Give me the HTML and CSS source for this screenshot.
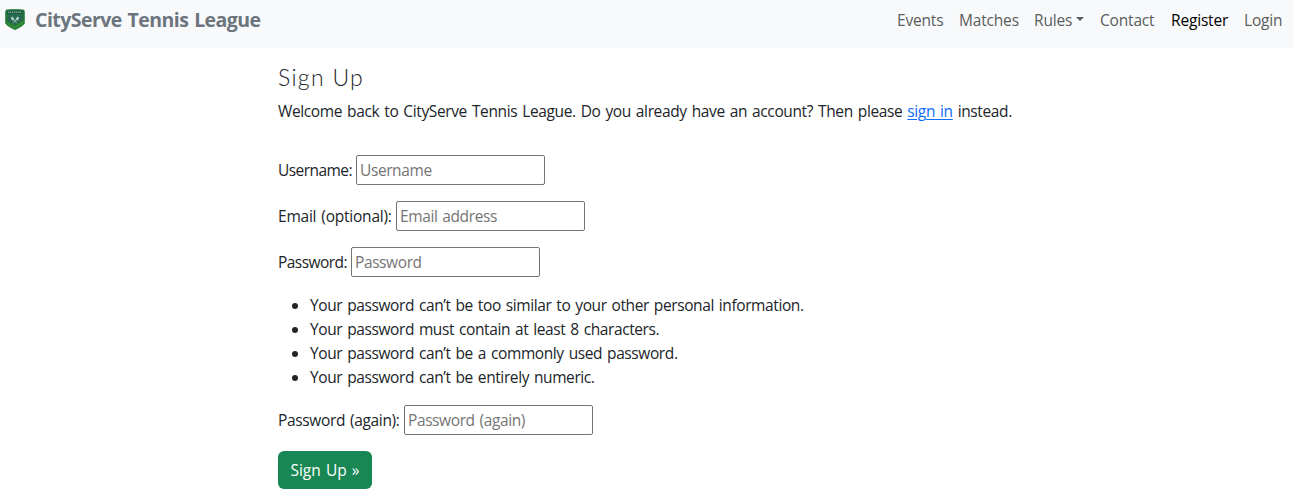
FILE: index.html
```html
<!DOCTYPE html>
<html lang="en">
<head>
<meta charset="utf-8">
<title>CityServe Tennis League</title>
<link rel="stylesheet" href="styles.css">
</head>
<body>
<nav class="navbar">
  <a class="brand" href="#">
    <svg class="crest" viewBox="0 0 20 21" aria-hidden="true">
      <path d="M1 1Q10-.5 19 1Q19.400 2.500 19.600 5L19.400 14.500Q18 17 10 20.700Q2 17 .6 14.500L.4 5Q.6 2.500 1 1Z" fill="#23733f" stroke="#2f8540" stroke-width=".7"/>
      <path d="M2.500 2Q10 1 17.500 2L18 5H2Z" fill="#1c5445"/>
      <path d="M3 3.200H17" stroke="#a9c9b8" stroke-width="1" stroke-dasharray="1.400 .6"/>
      <path d="M3 6H17L16.500 12L10 16L3.500 12Z" fill="#286753"/>
      <path d="M1.500 13L10 17.500L18.500 11.500L18.500 14.500L10 19.500L1.500 14.500Z" fill="#35932c"/>
      <path d="M8 14.300L12.500 9M12 14.300L7.500 9" stroke="#9fc4b3" stroke-width=".8"/>
      <ellipse cx="7.600" cy="9.700" rx="1.400" ry="2" transform="rotate(-35 7.600 9.700)" fill="#a9cdbc"/>
      <ellipse cx="12.400" cy="9.700" rx="1.400" ry="2" transform="rotate(35 12.400 9.700)" fill="#a9cdbc"/>
    </svg>
    <span class="brand-name">CityServe Tennis League</span>
  </a>
  <div class="menu">
    <a class="item events" href="#">Events</a>
    <a class="item matches" href="#">Matches</a>
    <a class="item rules" href="#"><span>Rules</span><i class="caret"></i></a>
    <a class="item contact" href="#">Contact</a>
    <a class="item register active" href="#">Register</a>
    <a class="item login" href="#">Login</a>
  </div>
</nav>
<main class="content">
  <h1 class="title">Sign Up</h1>
  <p class="intro">Welcome back to CityServe Tennis League. Do you already have an account? Then please <a class="link" href="#">sign in</a> instead.</p>
  <form class="form">
    <div class="field"><label class="label username" for="u">Username:</label><input class="input" id="u" type="text" placeholder="Username"></div>
    <div class="field"><label class="label email" for="e">Email (optional):</label><input class="input" id="e" type="email" placeholder="Email address"></div>
    <div class="field"><label class="label password" for="p">Password:</label><input class="input" id="p" type="password" placeholder="Password"></div>
    <ul class="hints">
      <li>Your password can’t be too similar to your other personal information.</li>
      <li>Your password must contain at least 8 characters.</li>
      <li>Your password can’t be a commonly used password.</li>
      <li>Your password can’t be entirely numeric.</li>
    </ul>
    <div class="field"><label class="label again" for="p2">Password (again):</label><input class="input" id="p2" type="password" placeholder="Password (again)"></div>
    <button class="submit" type="button">Sign Up »</button>
  </form>
</main>
</body>
</html>
```
FILE: styles.css
```css
* { box-sizing: border-box; }
body {
  margin: 0;
  background: #fff;
  color: #212529;
  font: 400 15.500px/24px "Open Sans", "Noto Sans", sans-serif;
  letter-spacing: -0.350px;
  word-spacing: 1.300px;
  overflow: hidden;
}
.navbar {
  display: flex;
  justify-content: space-between;
  align-items: flex-start;
  height: 48px;
  padding: 8px 11px 0 5px;
  background: #f8f9fa;
}
.brand { display: flex; gap: 10px; color: #6c757d; text-decoration: none; }
.crest { width: 20px; height: 21px; margin-top: 1px; }
.brand-name { font-size: 19.500px; font-weight: 700; letter-spacing: -0.550px; white-space: nowrap; }
.menu { display: flex; gap: 16px; letter-spacing: -0.180px; }
.item { display: flex; color: #5b5d5e; text-decoration: none; white-space: nowrap; }
.active { color: #000; }
.events { width: 46px; }
.matches { width: 59px; }
.rules { width: 50px; justify-content: space-between; }
.contact { width: 55px; }
.register { width: 57px; }
.login { width: 39px; }
.caret { margin-top: 9px; width: 8px; height: 5px; border: 4.500px solid transparent; border-top-color: currentColor; border-bottom: 0; }
.content { width: 740px; margin-left: 278px; }
.title { margin: 15px 0 7px; font: 300 23px/29px Lato, sans-serif; letter-spacing: 1.300px; word-spacing: 0; }
.intro { margin: 0 0 32px; letter-spacing: -0.370px; white-space: nowrap; }
.link { color: #0d6efd; text-underline-offset: 2px; text-decoration-thickness: 1px; }
.field { display: flex; align-items: center; height: 30px; margin-bottom: 16px; }
.label { white-space: nowrap; }
.username { width: 78px; letter-spacing: -0.550px; }
.email { width: 118px; letter-spacing: -0.230px; }
.password { width: 73px; letter-spacing: -0.550px; }
.again { width: 126px; }
.input {
  width: 189px;
  height: 30px;
  padding: 1px 3px;
  border: 1px solid #767676;
  border-radius: 2px;
  background: #fff;
  font: inherit;
  letter-spacing: -0.400px;
  word-spacing: inherit;
}
.input::placeholder { color: #757575; opacity: 1; }
.hints { margin: 0 0 16px; padding-left: 32px; letter-spacing: -0.400px; }
.submit {
  display: block;
  width: 94px;
  height: 38px;
  padding: 0;
  border: 0;
  border-radius: 6px;
  background: #198754;
  color: #fff;
  font: inherit;
  letter-spacing: -0.050px;
  word-spacing: inherit;
}
```
